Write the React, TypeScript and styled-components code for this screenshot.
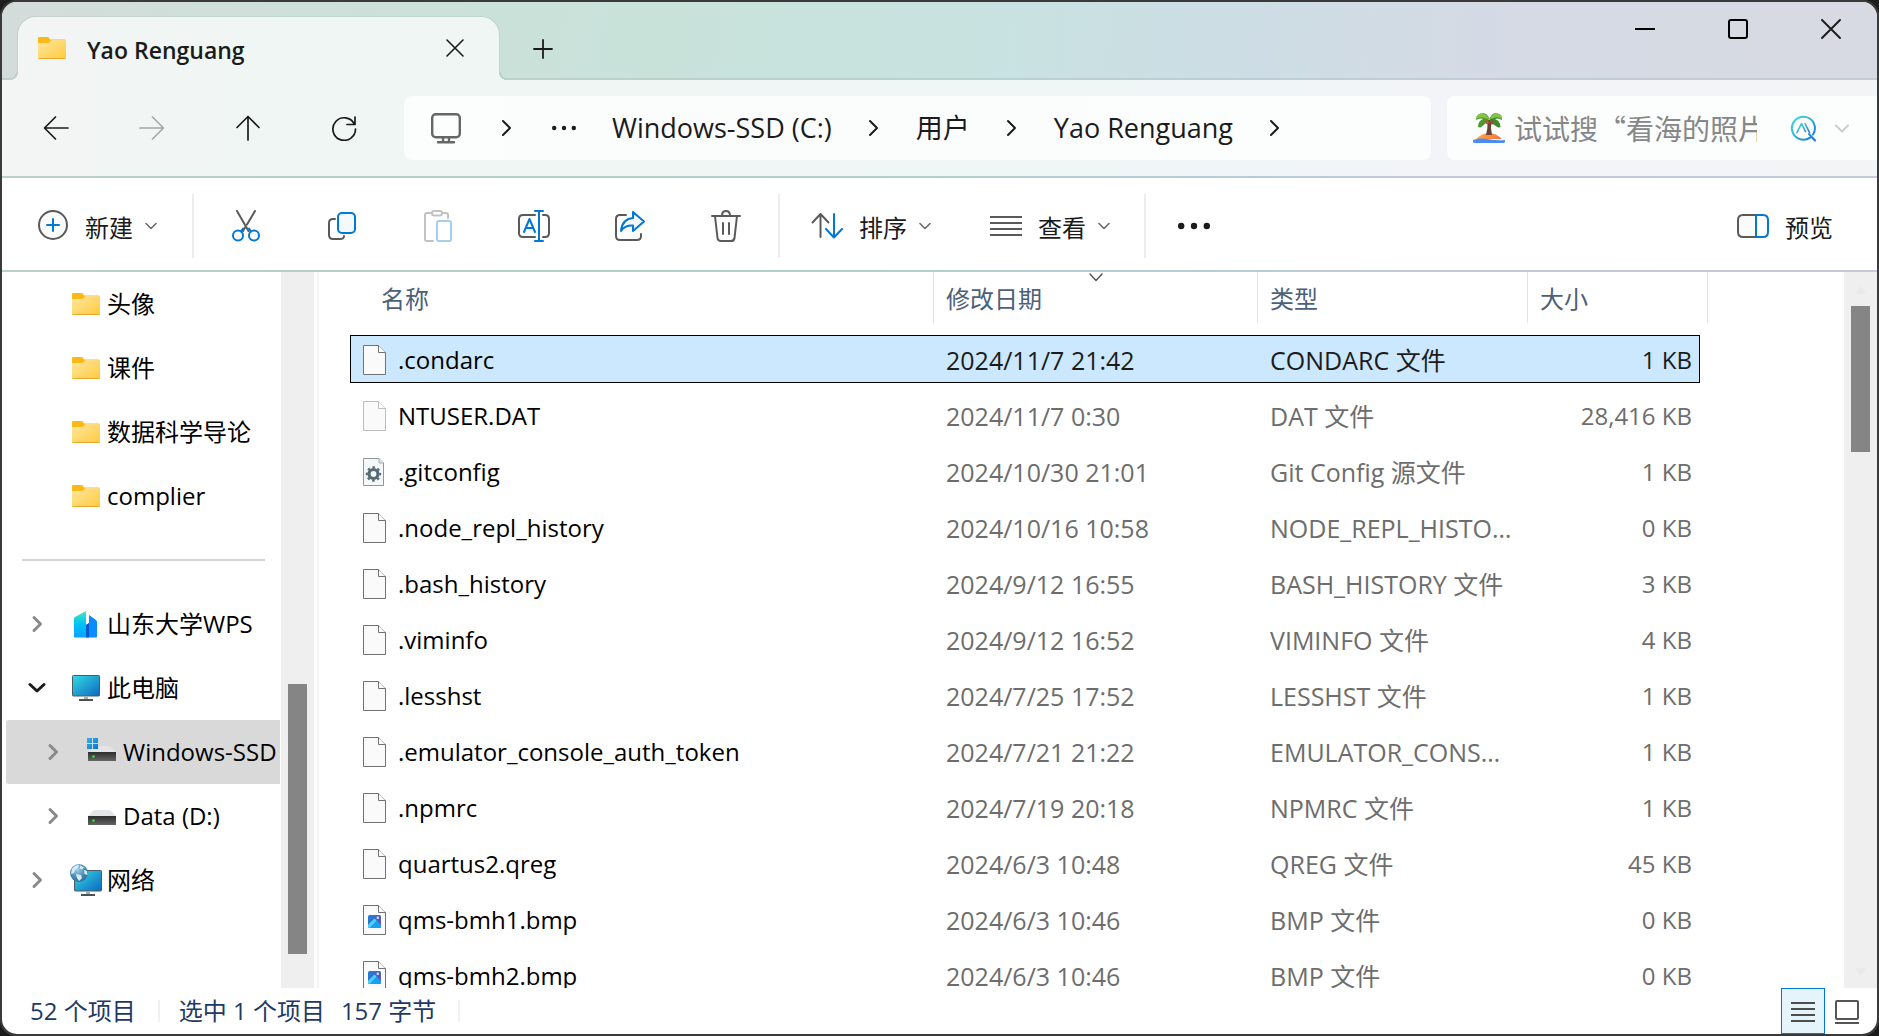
import React, { useState } from "react";
import styled, { createGlobalStyle, css } from "styled-components";

const UI_FONT = `"Open Sans", "Noto Sans CJK SC", sans-serif`;
const EDGE = "linear-gradient(90deg, #bcd0c9 0%, #add1ca 38%, #b4ced6 58%, #c3c8da 80%, #c6c9da 100%)";

const GlobalStyle = createGlobalStyle`
  *, *::before, *::after { box-sizing: border-box; }
  html, body { margin: 0; background: #1c1c1c; }
  body { font-family: ${UI_FONT}; font-size: 24px; line-height: 32px; color: #1b1b1b; }
  button, input { font: inherit; color: inherit; }
  svg { display: block; flex: none; }
`;

/* ---------- window frame ---------- */

const Frame = styled.div`
  height: 100vh;
  padding: 2px;
  background: #3b3a3b;
  border-radius: 16px;
  display: flex;
  overflow: hidden;
`;

const Window = styled.main`
  flex: 1;
  min-width: 0;
  display: flex;
  flex-direction: column;
  overflow: hidden;
  border-radius: 15px;
  background: #fff;
`;

const Chrome = styled.header`
  background: linear-gradient(95deg, #d4dcda 0%, #cee0d9 14%, #c8e2da 34%, #c8e2e1 52%, #cddde4 66%, #d5dae5 80%, #d8dae2 100%);
`;

const Edge = styled.div`
  height: 2px;
  flex: none;
  background: ${EDGE};
`;

const TitleBar = styled.div`
  display: flex;
  height: 78px;
`;

const StripEdge = styled.div<{ $grow?: boolean }>`
  flex: ${(p) => (p.$grow ? "1" : "0 0 16px")};
  display: flex;
  justify-content: space-between;
  border-bottom: 2px solid rgba(80, 120, 130, 0.15);
`;

const Tab = styled.div`
  position: relative;
  display: flex;
  align-items: center;
  width: 481px;
  margin-top: 15px;
  padding: 0 24px 2px 20px;
  border-radius: 18px 18px 0 0;
  background: rgba(255, 255, 255, 0.7);
  box-shadow: 0 0 0 1px rgba(80, 120, 120, 0.1);
  clip-path: inset(-2px -12px 0 -12px);

  &::before,
  &::after {
    content: "";
    position: absolute;
    bottom: 0;
    width: 8px;
    height: 8px;
  }
  &::before {
    right: 100%;
    background: radial-gradient(circle at 0 0, #d2dcd9 6px, #c3d1cd 6px, #c3d1cd 8px, #f2f5f4 8px);
  }
  &::after {
    left: 100%;
    background: radial-gradient(circle at 100% 0, #cae1da 6px, #b9d3cc 6px, #b9d3cc 8px, #eff6f4 8px);
  }
`;

const TabTitle = styled.span`
  flex: 1;
  margin-left: 21px;
  padding-top: 4px;
  font-size: 23px;
  font-weight: 600;
`;

const PlainButton = styled.button`
  display: flex;
  align-items: center;
  justify-content: center;
  padding: 0;
  border: 0;
  background: none;
`;

const TabClose = styled(PlainButton)`
  width: 40px;
  height: 40px;
`;

const NewTab = styled(PlainButton)`
  width: 48px;
  height: 48px;
  margin: 23px 0 0 20px;
`;

const Controls = styled.div`
  display: flex;
`;

const ControlButton = styled(PlainButton)`
  width: 93px;
  height: 54px;
`;

/* ---------- navigation row ---------- */

const NavRow = styled.nav`
  display: flex;
  align-items: center;
  height: 96px;
  background: rgba(255, 255, 255, 0.7);
`;

const NavButtons = styled.div`
  display: flex;
  gap: 32px;
  padding: 0 28px 0 22px;
`;

const NavButton = styled(PlainButton)`
  width: 64px;
  height: 64px;
`;

const AddressBar = styled.div`
  flex: 1;
  min-width: 0;
  display: flex;
  align-items: center;
  height: 64px;
  padding-left: 26px;
  border-radius: 8px;
  background: rgba(255, 255, 255, 0.76);
`;

const Crumb = styled(PlainButton)`
  font-size: 27px;
  line-height: 36px;
  white-space: nowrap;
`;

const CrumbArrow = styled(PlainButton)<{ $wide?: boolean }>`
  width: ${(p) => (p.$wide ? "90px" : "84px")};
  height: 48px;
`;

const MoreCrumbs = styled(PlainButton)`
  width: 24px;
  height: 48px;
  margin-right: 36px;
`;

const SearchBox = styled.label`
  flex: none;
  display: flex;
  align-items: center;
  width: 430px;
  height: 64px;
  margin-left: 16px;
  padding-left: 25px;
  border-radius: 8px 0 0 8px;
  background: rgba(255, 255, 255, 0.76);
`;

const SearchInput = styled.input`
  width: 243px;
  height: 40px;
  margin: 0 33px 0 8px;
  padding: 0;
  border: 0;
  outline: 0;
  background: none;
  font-family: "Noto Sans CJK SC", sans-serif;
  font-size: 28px;
  &::placeholder {
    color: #868788;
    opacity: 1;
  }
`;

const SearchMenu = styled(PlainButton)`
  width: 24px;
  height: 40px;
  margin-left: 12px;
`;

/* ---------- command bar ---------- */

const CommandBar = styled.div`
  flex: none;
  display: flex;
  align-items: center;
  height: 92px;
  padding: 4px 44px 0 35px;
`;

const Group = styled.div<{ $last?: boolean }>`
  display: flex;
  align-items: center;
  height: 64px;
  ${(p) => !p.$last && css`border-right: 2px solid #ececec;`}
`;

const Command = styled(PlainButton)`
  gap: 16px;
  height: 64px;
  white-space: nowrap;
`;

const CommandLabel = styled.span`
  padding-top: 4px;
`;

const CommandWithMenu = styled(Command)`
  & > svg:last-child {
    margin-left: -4px;
  }
`;

const IconCommand = styled(PlainButton)`
  width: 96px;
  height: 64px;
`;

const NewGroup = styled(Group)`
  width: 157px;
`;

const EditGroup = styled(Group)`
  width: 586px;
  padding-left: 4px;
`;

const ArrangeGroup = styled(Group)`
  width: 366px;
  gap: 59px;
  padding-left: 31px;
`;

const Spacer = styled.div`
  flex: 1;
`;

/* ---------- body ---------- */

const Body = styled.div`
  flex: 1;
  min-height: 0;
  display: flex;
`;

const SideNav = styled.nav`
  flex: none;
  width: 279px;
  overflow: hidden;
`;

const TreeList = styled.ul`
  list-style: none;
  margin: 0;
  padding: 0 1px 0 4px;
`;

const TreeItem = styled.li<{ $level: number; $selected?: boolean }>`
  display: flex;
  align-items: center;
  height: 64px;
  padding-left: ${(p) => (p.$level === 2 ? "31px" : "15px")};
  border-radius: 3px 0 0 3px;
  overflow: hidden;
  background: ${(p) => (p.$selected ? "#d9d9d9" : "transparent")};
`;

const TreeToggle = styled(PlainButton)`
  flex: none;
  width: 32px;
  height: 32px;
`;

const ToggleGap = styled.span`
  flex: none;
  width: 32px;
`;

const TreeLink = styled.a`
  display: flex;
  align-items: center;
  gap: 7px;
  margin-left: 19px;
  color: #000;
  text-decoration: none;
  white-space: nowrap;
`;

const TreeIcon = styled.span`
  flex: none;
  display: flex;
  justify-content: center;
  width: 28px;
`;

const TreeDivider = styled.li`
  height: 64px;
  padding: 31px 15px 0 16px;
  &::before {
    content: "";
    display: block;
    height: 2px;
    background: #d4d4d4;
  }
`;

const ScrollTrack = styled.div<{ $before: number; $thumb: number; $after: number }>`
  flex: none;
  position: relative;
  width: 33px;
  padding: 0 7px;
  display: grid;
  grid-template-rows: ${(p) => `${p.$before}fr ${p.$thumb}fr ${p.$after}fr`};
  background: #efefef;
`;

const ScrollThumb = styled.div`
  grid-row: 2;
  background: #858585;
`;

const ScrollArrow = styled.span<{ $end?: boolean }>`
  position: absolute;
  left: 11px;
  ${(p) => (p.$end ? "bottom: 12px;" : "top: 14px;")}
`;

const PaneDivider = styled.div`
  flex: none;
  width: 2px;
  margin-left: 3px;
  background: #f4f4f4;
`;

const ListPane = styled.section`
  flex: 1;
  min-width: 0;
  overflow: hidden;
  padding-left: 31px;
`;

const FileTable = styled.table`
  table-layout: fixed;
  width: 1350px;
  margin-top: -8px;
  border-collapse: separate;
  border-spacing: 0 8px;
`;

const HeadCell = styled.th`
  height: 55px;
  padding: 0;
  vertical-align: top;
  font-weight: 400;
`;

const HeadButton = styled(PlainButton)<{ $first?: boolean; $last?: boolean }>`
  position: relative;
  justify-content: flex-start;
  width: ${(p) => (p.$last ? "180px" : "100%")};
  height: 51px;
  padding: 2px 0 0 ${(p) => (p.$first ? "31px" : "12px")};
  border-right: 1px solid #e2e2e2;
  color: #4c607a;
`;

const SortMark = styled.span`
  position: absolute;
  top: 1px;
  left: 50%;
  margin-left: -7px;
`;

const Cell = styled.td<{ $kind?: "name" | "date" | "type" | "size" }>`
  height: 48px;
  padding: 1px 12px 0;
  border: solid transparent;
  border-width: 1px 0;
  overflow: hidden;
  text-overflow: ellipsis;
  white-space: nowrap;
  color: #6d6d6d;
  ${(p) => p.$kind === "name" && css`border-left-width: 1px; color: #000;`}
  ${(p) => (p.$kind === "date" || p.$kind === "type") && css`font-size: 25px;`}
  ${(p) => p.$kind === "size" && css`border-right-width: 1px; padding-right: 7px; text-align: right;`}
`;

const FileRow = styled.tr<{ $selected: boolean }>`
  ${(p) =>
    p.$selected &&
    css`
      ${Cell} {
        background: #cce8ff;
        border-color: #000;
        color: #1b1b1b;
      }
      ${Cell}:first-child {
        color: #000;
      }
    `}
`;

const FileName = styled.span`
  display: flex;
  align-items: center;
  gap: 12px;
`;

const IconSlot = styled.span`
  flex: none;
  width: 23px;
`;

/* ---------- status bar ---------- */

const StatusBar = styled.footer`
  flex: none;
  display: flex;
  align-items: center;
  height: 46px;
  padding-left: 28px;
  color: #1e3a64;
`;

const StatusGroup = styled.div`
  display: flex;
  align-items: center;
  gap: 16px;
  height: 22px;
  margin-right: 19px;
  padding-right: 22px;
  border-right: 2px solid #f0f0f0;
`;

const ViewButton = styled(PlainButton)<{ $active?: boolean }>`
  width: 44px;
  height: 46px;
  padding-top: 2px;
  border: 1px solid ${(p) => (p.$active ? "#0078d7" : "transparent")};
  background: ${(p) => (p.$active ? "#e5f3fb" : "transparent")};
`;

const ViewButtons = styled.div`
  display: flex;
  margin-right: 8px;
`;

/* ---------- icons ---------- */

const INK = "#1b1b1b";
const GREY = "#5a5a5a";
const BLUE = "#0078d4";

type StrokeProps = { w: number; h: number; d: string; color?: string; sw?: number };
const Stroke = ({ w, h, d, color = INK, sw = 2 }: StrokeProps) => (
  <svg width={w} height={h} viewBox={`0 0 ${w} ${h}`} fill="none" stroke={color} strokeWidth={sw} strokeLinecap="round" strokeLinejoin="round" aria-hidden="true">
    <path d={d} />
  </svg>
);

const SmallChevron = ({ color = "#6a6a6a" }: { color?: string }) => <Stroke w={12} h={8} d="M1 1.5 6 6.5 11 1.5" color={color} sw={1.6} />;
const CrumbChevron = () => <Stroke w={12} h={18} d="M2 2 9 9 2 16" sw={2} />;

const Gradients = () => (
  <svg width="0" height="0" style={{ position: "absolute" }} aria-hidden="true">
    <defs>
      <linearGradient id="folder" x1="0" y1="0" x2="1" y2="1">
        <stop offset="0" stopColor="#ffe7a2" />
        <stop offset="1" stopColor="#ffca3c" />
      </linearGradient>
      <linearGradient id="screen" x1="0" y1="0" x2="1" y2="1">
        <stop offset="0" stopColor="#35dbe3" />
        <stop offset="1" stopColor="#0c68c0" />
      </linearGradient>
      <linearGradient id="tower" x1="0" y1="0" x2="0" y2="1">
        <stop offset="0" stopColor="#42e8b4" />
        <stop offset="0.5" stopColor="#00c2f8" />
        <stop offset="1" stopColor="#0aa0ff" />
      </linearGradient>
      <linearGradient id="drive" x1="0" y1="0" x2="0" y2="1">
        <stop offset="0" stopColor="#2d2d2d" />
        <stop offset="1" stopColor="#656565" />
      </linearGradient>
      <linearGradient id="flag" x1="0" y1="0" x2="1" y2="1">
        <stop offset="0" stopColor="#2db4ee" />
        <stop offset="1" stopColor="#0a74cf" />
      </linearGradient>
      <linearGradient id="photo" x1="0" y1="0" x2="1" y2="1">
        <stop offset="0" stopColor="#1585d8" />
        <stop offset="1" stopColor="#7a45b0" />
      </linearGradient>
      <radialGradient id="globe" cx="0.4" cy="0.3" r="0.8">
        <stop offset="0" stopColor="#9fd2ea" />
        <stop offset="0.6" stopColor="#3f86b5" />
        <stop offset="1" stopColor="#2b6590" />
      </radialGradient>
      <linearGradient id="assist" x1="0" y1="0" x2="1" y2="1">
        <stop offset="0" stopColor="#3fe0d0" />
        <stop offset="1" stopColor="#1a73e0" />
      </linearGradient>
      <linearGradient id="sand" x1="0" y1="0" x2="1" y2="0">
        <stop offset="0" stopColor="#ffab45" />
        <stop offset="1" stopColor="#f5703f" />
      </linearGradient>
    </defs>
  </svg>
);

const FolderIcon = () => (
  <svg width="28" height="22" viewBox="0 0 28 22" aria-hidden="true">
    <path d="M0 1.2Q0 0 1.2 0h8.3q1 0 1.7 1l1 1.5H26.500q1.500 0 1.500 1.500V8H0z" fill="#fbb917" />
    <path d="M0 6h9.800q1 0 1.700-.8L12.900 3.700q.6-.7 1.500-.7H27q1 0 1 1v16.500q0 1.500-1.500 1.500h-25Q0 22 0 20.500z" fill="url(#folder)" />
    <path d="M.2 20.800q.3 .7 1.300 .7h25q1 0 1.300-.7" fill="none" stroke="#e9a72a" />
  </svg>
);

const MonitorIcon = () => (
  <svg width="28" height="26" viewBox="0 0 28 26" aria-hidden="true">
    <rect x="0.500" y="0.500" width="27" height="20.500" rx="0.800" fill="url(#screen)" stroke="#4f5a62" />
    <path d="M12 21.500h4V24h-4z" fill="#a9adb1" />
    <path d="M7 24h14v2H7z" fill="#4a5157" />
  </svg>
);

const TowerIcon = () => (
  <svg width="28" height="28" viewBox="0 0 28 28" aria-hidden="true">
    <path d="M2 8.500Q2 7.500 3 7L14 1v26.500H3q-1 0-1-1z" fill="url(#tower)" />
    <path d="M14 15l3-2V5l7 5q1 .8 1 2v14.500q0 1-1 1H14z" fill="#0a8cff" />
    <path d="M14 15l3-2v14.500h-3z" fill="#0359c9" />
  </svg>
);

const DriveIcon = ({ system }: { system?: boolean }) => (
  <svg width="28" height="30" viewBox="0 -1 28 30" overflow="visible" aria-hidden="true">
    <path d="M6 8h16l6 6H0z" fill="#e3e4e6" />
    <path d="M0 14h28v9H0z" fill="url(#drive)" />
    <circle cx="5.500" cy="18.500" r="1.300" fill="#3be04b" />
    {system && (
      <>
        <path d="M-2 -1h13v12H-2z" fill="#d9d9d9" />
        <path d="M-1 0h5v5h-5zM5 0h5v5H5zM-1 6h5v5h-5zM5 6h5v5H5z" fill="url(#flag)" />
      </>
    )}
  </svg>
);

const NetworkIcon = () => (
  <svg width="32" height="32" viewBox="0 0 32 32" aria-hidden="true">
    <rect x="4.500" y="6.500" width="27" height="20.500" rx="0.800" fill="url(#screen)" stroke="#4f5a62" />
    <path d="M16 27h4v3h-4z" fill="#a9adb1" />
    <path d="M11 30h14v2H11z" fill="#4a5157" />
    <circle cx="9" cy="9" r="9" fill="url(#globe)" />
    <path d="M2 5q3-4 7-4l-1 3-3 2-1 3-3 1zM10 1.500l4 2-2 2-2-1zM6 10l5 1 1 3-3 3-2-3zM14 6l3 1 .5 4-3-1z" fill="#dcebf3" />
  </svg>
);

const PageIcon = ({ kind }: { kind: string }) => {
  if (kind === "config") {
    return (
      <svg width="21" height="28" viewBox="0 0 21 28" aria-hidden="true">
        <path d="M.5 .5h15.500l4.500 4.500v22.500H.5z" fill="#f5f8f9" stroke="#8e979b" />
        <path d="M16 .5V5h4.500" fill="#dfe5e8" stroke="#a6aeb2" />
        <circle cx="10.500" cy="16" r="4.500" fill="none" stroke="#566a73" strokeWidth="3.200" />
        <circle cx="10.500" cy="16" r="6.700" fill="none" stroke="#566a73" strokeWidth="2" strokeDasharray="2.6 2.660" strokeDashoffset="1.300" />
      </svg>
    );
  }
  const line = kind === "faded" ? "#bdbdbd" : "#727272";
  return (
    <svg width="23" height="30" viewBox="0 0 23 30" aria-hidden="true">
      <path d="M.5 .5h15l7 7v22H.5z" fill="#fafafa" stroke={line} />
      <path d="M15.500 .5v7h7" fill="#fff" stroke={line} />
      {kind === "image" && (
        <>
          <rect x="5" y="10" width="13" height="13" rx="1.500" fill="url(#photo)" />
          <path d="M5 20l6-6q.5-.5 1 0l6 6v1.500q0 1.500-1.500 1.500h-10Q5 23 5 21.500z" fill="#18a0f0" />
          <path d="M5 20l6-6q.5-.5 1 0l1.500 1.500L6.500 23Q5 23 5 21.500z" fill="#4fd2f8" />
          <circle cx="14.800" cy="12.800" r="1.200" fill="#e8dcff" />
        </>
      )}
    </svg>
  );
};

const PalmIcon = () => (
  <svg width="34" height="32" viewBox="0 0 34 32" aria-hidden="true">
    <path d="M4 27Q10 21 17 21t13 6z" fill="url(#sand)" />
    <path d="M1 28q8-2.500 16-.8T33 28v1.500Q33 31 31 31H3q-2 0-2-1.500z" fill="#4a8cf5" />
    <path d="M15.500 8h4q-1.200 8 .5 15h-6q2-7 1.500-15z" fill="#6b4438" />
    <path d="M17.500 7Q15 0 9 1.500 4 2.500 4 8q4-2.500 7-1-5 2-5 8 2.500 1 4-.5 3-2 6-6.500z" fill="#4c9a2f" />
    <path d="M17.500 7Q20 0 25.500 1.500 30.500 2.500 30 8q-4-2.500-7-1 5.500 2 5.500 8-2.500 1-4-.5-4-2-7-6.500z" fill="#3c8b2b" />
    <path d="M17 7Q14 1 9 1.500 4 2.500 4 7q5-3 8-1zM18 7Q20 1 25.500 1.500 30.500 2.500 30 7q-5-3-8-1z" fill="#86c440" />
    <circle cx="15" cy="10" r="2" fill="#b5563f" />
    <circle cx="20" cy="10.500" r="2" fill="#a34a38" />
  </svg>
);

const AssistIcon = () => (
  <svg width="28" height="28" viewBox="0 0 28 28" fill="none" stroke="url(#assist)" strokeWidth="2" strokeLinecap="round" strokeLinejoin="round" aria-hidden="true">
    <path d="M20 23.600A11.500 11.500 0 1 1 23 20.500M19 20l6 6.500" />
    <path d="M7 18.500l4.500-9 4 8M15 9.500l4.500 9" strokeWidth="1.600" />
  </svg>
);

const icon32 = { width: 32, height: 32, viewBox: "0 0 32 32", fill: "none", stroke: GREY, strokeWidth: 2, strokeLinecap: "round", strokeLinejoin: "round", "aria-hidden": true } as const;

const NewIcon = () => (
  <svg {...icon32}>
    <circle cx="16" cy="15" r="14" fill="#fafafa" />
    <path d="M16 9v12M10 15h12" stroke={BLUE} />
  </svg>
);
const CutIcon = () => (
  <svg {...icon32}>
    <path d="M7 1l11.500 20M25 1 17 14.500M15 17.500 13 21" />
    <g stroke={BLUE}>
      <circle cx="8" cy="25.500" r="5" />
      <circle cx="24" cy="25.500" r="5" />
      <path d="M11 21.500l2-3M21 21.500l-2-3" />
    </g>
  </svg>
);
const CopyIcon = () => (
  <svg {...icon32}>
    <path d="M9 9H7q-4 0-4 4v12q0 4 4 4h7q4 0 4-3" />
    <rect x="12" y="3" width="17" height="20" rx="4" stroke={BLUE} fill="#f4f9fd" />
  </svg>
);
const PasteIcon = () => (
  <svg {...icon32} stroke="#c2c2c2">
    <path d="M10 3H5q-2 0-2 2v24q0 2 2 2h6M20 3h4q2 0 2 2v3" />
    <rect x="10" y="1" width="10" height="4.500" rx="2.200" />
    <rect x="15" y="11" width="14" height="20" rx="2" stroke="#a5cff0" />
  </svg>
);
const RenameIcon = () => (
  <svg {...icon32}>
    <path d="M17 5H5Q1 5 1 9v14q0 4 4 4h12M25 5h2q4 0 4 4v14q0 4-4 4h-2" />
    <path d="M6 22l5.500-13L17 22M8 18h7M21 1v30M17 1h8M17 31h8" stroke={BLUE} />
  </svg>
);
const ShareIcon = () => (
  <svg {...icon32}>
    <path d="M12 5H6Q2 5 2 9v17q0 4 4 4h17q4 0 4-4v-2" />
    <path d="M19 2l11 9.500L19 21v-5.500q-8-.5-12 5.500 1-12 12-13z" stroke={BLUE} fill="#f4f9fd" />
  </svg>
);
const TrashIcon = () => (
  <svg {...icon32}>
    <path d="M2 6h28M12 5.500q0-4.500 4-4.500t4 4.500M5 6l2.500 22q.4 3 3.500 3h10q3.100 0 3.500-3L27 6M13 13v11M19 13v11" />
  </svg>
);
const SortIcon = () => (
  <svg {...icon32}>
    <path d="M9.500 27V4M1.500 12.500 9.500 4l8 8.500" />
    <path d="M23 4v23M15 19l8 8.500 8-8.500" stroke={BLUE} />
  </svg>
);
const ViewIcon = () => (
  <svg {...icon32} strokeLinecap="butt">
    <path d="M0 7h32M0 13h32M0 19h32M0 25h32" />
  </svg>
);
const PreviewIcon = () => (
  <svg {...icon32}>
    <path d="M19 5H6Q1 5 1 10v12q0 5 5 5h13" fill="#fafafa" />
    <path d="M19 5h7q5 0 5 5v12q0 5-5 5h-7z" stroke={BLUE} />
  </svg>
);
const DotsIcon = ({ w, r }: { w: number; r: number }) => (
  <svg width={w} height="8" viewBox={`0 0 ${w} 8`} fill={INK} aria-hidden="true">
    <circle cx={r} cy="4" r={r} />
    <circle cx={w / 2} cy="4" r={r} />
    <circle cx={w - r} cy="4" r={r} />
  </svg>
);

/* ---------- data ---------- */

type Node = { label: string; icon: React.ReactNode; level?: number; open?: boolean; toggle?: boolean; selected?: boolean };

const pinned: Node[] = ["头像", "课件", "数据科学导论", "complier"].map((label) => ({ label, icon: <FolderIcon /> }));
const places: Node[] = [
  { label: "山东大学WPS", icon: <TowerIcon />, toggle: true },
  { label: "此电脑", icon: <MonitorIcon />, toggle: true, open: true },
  { label: "Windows-SSD (C:)", icon: <DriveIcon system />, level: 2, toggle: true, selected: true },
  { label: "Data (D:)", icon: <DriveIcon />, level: 2, toggle: true },
  { label: "网络", icon: <NetworkIcon />, toggle: true },
];

const files: [string, string, string, string, string][] = [
  [".condarc", "2024/11/7 21:42", "CONDARC 文件", "1 KB", "plain"],
  ["NTUSER.DAT", "2024/11/7 0:30", "DAT 文件", "28,416 KB", "faded"],
  [".gitconfig", "2024/10/30 21:01", "Git Config 源文件", "1 KB", "config"],
  [".node_repl_history", "2024/10/16 10:58", "NODE_REPL_HISTORY 文件", "0 KB", "plain"],
  [".bash_history", "2024/9/12 16:55", "BASH_HISTORY 文件", "3 KB", "plain"],
  [".viminfo", "2024/9/12 16:52", "VIMINFO 文件", "4 KB", "plain"],
  [".lesshst", "2024/7/25 17:52", "LESSHST 文件", "1 KB", "plain"],
  [".emulator_console_auth_token", "2024/7/21 21:22", "EMULATOR_CONSOLE_AUTH_TOKEN 文件", "1 KB", "plain"],
  [".npmrc", "2024/7/19 20:18", "NPMRC 文件", "1 KB", "plain"],
  ["quartus2.qreg", "2024/6/3 10:48", "QREG 文件", "45 KB", "plain"],
  ["qms-bmh1.bmp", "2024/6/3 10:46", "BMP 文件", "0 KB", "image"],
  ["qms-bmh2.bmp", "2024/6/3 10:46", "BMP 文件", "0 KB", "image"],
];

const TreeRow = ({ label, icon, level = 1, open, toggle, selected }: Node) => (
  <TreeItem $level={level} $selected={selected}>
    {toggle ? (
      <TreeToggle aria-label={`展开 ${label}`} aria-expanded={!!open}>
        {open ? <Stroke w={18} h={12} d="M2 2.500 9 9 16 2.500" sw={3} /> : <Stroke w={12} h={18} d="M3 2.500 9.500 9 3 15.500" color="#8a8a8a" sw={3} />}
      </TreeToggle>
    ) : (
      <ToggleGap />
    )}
    <TreeLink href="#" aria-current={selected ? "page" : undefined}>
      <TreeIcon>{icon}</TreeIcon>
      <span>{label}</span>
    </TreeLink>
  </TreeItem>
);

export default function App() {
  const [selected, setSelected] = useState(0);
  return (
    <Frame>
      <GlobalStyle />
      <Gradients />
      <Window>
        <Chrome>
          <TitleBar>
            <StripEdge />
            <Tab>
              <FolderIcon />
              <TabTitle>Yao Renguang</TabTitle>
              <TabClose aria-label="关闭标签页">
                <Stroke w={18} h={18} d="M1 1 17 17M17 1 1 17" sw={1.6} />
              </TabClose>
            </Tab>
            <StripEdge $grow>
              <NewTab aria-label="新标签页">
                <Stroke w={20} h={20} d="M10 1v18M1 10h18" sw={1.8} />
              </NewTab>
              <Controls>
                <ControlButton aria-label="最小化"><Stroke w={20} h={20} d="M0 10h20" color="#000" /></ControlButton>
                <ControlButton aria-label="最大化">
                  <svg width="20" height="20" viewBox="0 0 20 20" fill="none" stroke="#000" strokeWidth="2" aria-hidden="true"><rect x="1" y="1" width="18" height="18" rx="2" /></svg>
                </ControlButton>
                <ControlButton aria-label="关闭"><Stroke w={20} h={20} d="M1 1 19 19M19 1 1 19" sw={1.9} /></ControlButton>
              </Controls>
            </StripEdge>
          </TitleBar>
          <NavRow aria-label="导航">
            <NavButtons>
              <NavButton aria-label="后退"><Stroke w={26} h={26} d="M25 13H2M12.500 2 1.500 13l11 11" sw={1.7} /></NavButton>
              <NavButton aria-label="前进" disabled><Stroke w={26} h={26} d="M1 13h23M13.500 2l11 11-11 11" color="#a4a8a7" sw={1.7} /></NavButton>
              <NavButton aria-label="向上"><Stroke w={26} h={26} d="M13 25V2M2 12.500 13 1.500l11 11" sw={1.7} /></NavButton>
              <NavButton aria-label="刷新"><Stroke w={26} h={26} d="M23.300 9A11.300 11.300 0 1 0 24.500 14M24 2v7.500h-8" sw={1.7} /></NavButton>
            </NavButtons>
            <AddressBar>
              <svg width="32" height="32" viewBox="0 0 32 32" fill="none" stroke="#666" strokeWidth="2.400" strokeLinecap="round" aria-hidden="true">
                <rect x="2.200" y="2.200" width="27.600" height="23" rx="3.500" />
                <path d="M13 26v4M19 26v4M8 30.200h16" />
              </svg>
              <CrumbArrow $wide aria-label="此电脑 下级"><CrumbChevron /></CrumbArrow>
              <MoreCrumbs aria-label="更多路径"><DotsIcon w={24} r={2.2} /></MoreCrumbs>
              <Crumb>Windows-SSD (C:)</Crumb>
              <CrumbArrow aria-label="C 盘下级"><CrumbChevron /></CrumbArrow>
              <Crumb>用户</Crumb>
              <CrumbArrow aria-label="用户 下级"><CrumbChevron /></CrumbArrow>
              <Crumb>Yao Renguang</Crumb>
              <CrumbArrow aria-label="Yao Renguang 下级"><CrumbChevron /></CrumbArrow>
            </AddressBar>
            <SearchBox>
              <PalmIcon />
              <SearchInput type="text" aria-label="搜索" placeholder="试试搜“看海的照片”" />
              <AssistIcon />
              <SearchMenu aria-label="搜索选项"><Stroke w={14} h={9} d="M1 1.500 7 7.500 13 1.500" color="#c9cbce" sw={1.800} /></SearchMenu>
            </SearchBox>
          </NavRow>
        </Chrome>
        <Edge />
        <CommandBar role="toolbar" aria-label="命令栏">
          <NewGroup>
            <CommandWithMenu><NewIcon /><CommandLabel>新建</CommandLabel><SmallChevron /></CommandWithMenu>
          </NewGroup>
          <EditGroup>
            <IconCommand aria-label="剪切"><CutIcon /></IconCommand>
            <IconCommand aria-label="复制"><CopyIcon /></IconCommand>
            <IconCommand aria-label="粘贴" disabled><PasteIcon /></IconCommand>
            <IconCommand aria-label="重命名"><RenameIcon /></IconCommand>
            <IconCommand aria-label="共享"><ShareIcon /></IconCommand>
            <IconCommand aria-label="删除"><TrashIcon /></IconCommand>
          </EditGroup>
          <ArrangeGroup>
            <CommandWithMenu><SortIcon /><CommandLabel>排序</CommandLabel><SmallChevron /></CommandWithMenu>
            <CommandWithMenu><ViewIcon /><CommandLabel>查看</CommandLabel><SmallChevron /></CommandWithMenu>
          </ArrangeGroup>
          <Group $last>
            <IconCommand aria-label="更多"><DotsIcon w={32} r={3.2} /></IconCommand>
          </Group>
          <Spacer />
          <Command><PreviewIcon /><CommandLabel>预览</CommandLabel></Command>
        </CommandBar>
        <Edge />
        <Body>
          <SideNav aria-label="文件夹">
            <TreeList>
              {pinned.map((n) => <TreeRow key={n.label} {...n} />)}
              <TreeDivider role="separator" />
              {places.map((n) => <TreeRow key={n.label} {...n} />)}
            </TreeList>
          </SideNav>
          <ScrollTrack $before={412} $thumb={270} $after={34}><ScrollThumb /></ScrollTrack>
          <PaneDivider />
          <ListPane>
            <FileTable>
              <colgroup>
                <col style={{ width: 584 }} />
                <col style={{ width: 324 }} />
                <col style={{ width: 270 }} />
                <col />
              </colgroup>
              <thead>
                <tr>
                  <HeadCell scope="col"><HeadButton $first>名称</HeadButton></HeadCell>
                  <HeadCell scope="col" aria-sort="descending">
                    <HeadButton>修改日期<SortMark><Stroke w={14} h={9} d="M1 1 7 7.500 13 1" color="#555" sw={1.400} /></SortMark></HeadButton>
                  </HeadCell>
                  <HeadCell scope="col"><HeadButton>类型</HeadButton></HeadCell>
                  <HeadCell scope="col"><HeadButton $last>大小</HeadButton></HeadCell>
                </tr>
              </thead>
              <tbody>
                {files.map(([name, date, type, size, kind], i) => (
                  <FileRow key={name} $selected={i === selected} onClick={() => setSelected(i)}>
                    <Cell $kind="name"><FileName><IconSlot><PageIcon kind={kind} /></IconSlot>{name}</FileName></Cell>
                    <Cell $kind="date">{date}</Cell>
                    <Cell $kind="type">{type}</Cell>
                    <Cell $kind="size">{size}</Cell>
                  </FileRow>
                ))}
              </tbody>
            </FileTable>
          </ListPane>
          <ScrollTrack $before={34} $thumb={146} $after={536}>
            <ScrollArrow><svg width="11" height="8" viewBox="0 0 11 8" aria-hidden="true"><path d="M0 8 5.500 0 11 8z" fill="#e9e9e9" /></svg></ScrollArrow>
            <ScrollThumb />
            <ScrollArrow $end><svg width="11" height="8" viewBox="0 0 11 8" aria-hidden="true"><path d="M0 0 5.500 8 11 0z" fill="#e9e9e9" /></svg></ScrollArrow>
          </ScrollTrack>
        </Body>
        <StatusBar>
          <StatusGroup><span>52 个项目</span></StatusGroup>
          <StatusGroup><span>选中 1 个项目</span><span>157 字节</span></StatusGroup>
          <Spacer />
          <ViewButtons>
            <ViewButton $active aria-label="详细信息"><Stroke w={24} h={22} d="M0 2h24M0 8h24M0 14h24M0 20h24" color="#4d4d4d" /></ViewButton>
            <ViewButton aria-label="大图标">
              <svg width="24" height="24" viewBox="0 0 24 24" fill="none" stroke="#555" strokeWidth="2" aria-hidden="true">
                <rect x="1" y="1" width="22" height="18" rx="1" />
                <path d="M0 23h24" />
              </svg>
            </ViewButton>
          </ViewButtons>
        </StatusBar>
      </Window>
    </Frame>
  );
}
